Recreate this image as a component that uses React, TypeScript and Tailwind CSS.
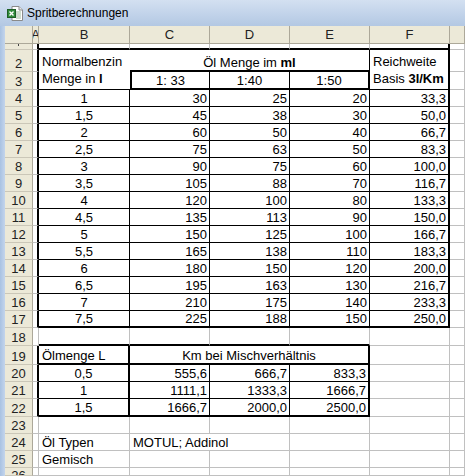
import type { ReactNode } from "react";

type Bd = "g" | "t" | "k" | "n";

const RB: Record<Bd, string> = {
  g: "border-r border-r-[#c0c0c0]",
  t: "border-r border-r-black",
  k: "border-r-2 border-r-black",
  n: "",
};
const BB: Record<Bd, string> = {
  g: "border-b border-b-[#c0c0c0]",
  t: "border-b border-b-black",
  k: "border-b-2 border-b-black",
  n: "",
};
const AL = {
  left: "justify-start pl-[3px]",
  right: "justify-end pr-[2px]",
  center: "justify-center",
};

function Cell({
  r = "g",
  b = "g",
  align = "left",
  className = "",
  children,
}: {
  r?: Bd;
  b?: Bd;
  align?: "left" | "right" | "center";
  className?: string;
  children?: ReactNode;
}) {
  return (
    <div
      className={`flex items-end whitespace-nowrap leading-[15px] ${RB[r]} ${BB[b]} ${AL[align]} ${className}`}
    >
      {children}
    </div>
  );
}

function RowHead({ n, className = "" }: { n: number | string; className?: string }) {
  return (
    <div
      className={`flex items-end justify-center overflow-hidden leading-[15px] bg-[#ece9d8] text-[#222] border-r border-r-[#aca899] border-b border-b-[#cbc7b8] ${className}`}
    >
      {n}
    </div>
  );
}

const upper = [
  ["1", "30", "25", "20", "33,3"],
  ["1,5", "45", "38", "30", "50,0"],
  ["2", "60", "50", "40", "66,7"],
  ["2,5", "75", "63", "50", "83,3"],
  ["3", "90", "75", "60", "100,0"],
  ["3,5", "105", "88", "70", "116,7"],
  ["4", "120", "100", "80", "133,3"],
  ["4,5", "135", "113", "90", "150,0"],
  ["5", "150", "125", "100", "166,7"],
  ["5,5", "165", "138", "110", "183,3"],
  ["6", "180", "150", "120", "200,0"],
  ["6,5", "195", "163", "130", "216,7"],
  ["7", "210", "175", "140", "233,3"],
  ["7,5", "225", "188", "150", "250,0"],
];

const lower = [
  ["0,5", "555,6", "666,7", "833,3"],
  ["1", "1111,1", "1333,3", "1666,7"],
  ["1,5", "1666,7", "2000,0", "2500,0"],
];

function ExcelIcon() {
  return (
    <svg width="17" height="16" viewBox="0 0 17 16">
      <path d="M5 1.5h7l3.5 3.5v10.5H5z" fill="#fff" stroke="#8a8a8a" />
      <path d="M12 1.5V5h3.5" fill="#e8e8e8" stroke="#8a8a8a" />
      <path d="M9 7h5M9 9h5M9 11h5M9 13h5" stroke="#9bb89b" />
      <rect x="0.5" y="4.5" width="8" height="8" fill="#2f8a3a" stroke="#1d5e25" />
      <path d="M2.5 6.5l4 4M6.5 6.5l-4 4" stroke="#fff" strokeWidth="1.4" />
    </svg>
  );
}

export default function App() {
  const cols = ["A", "B", "C", "D", "E", "F", ""];

  return (
    <div className="w-[465px] h-[476px] overflow-hidden bg-white flex flex-col font-['Liberation_Sans',Arial,sans-serif] text-[13px] text-black">
      {/* Title bar */}
      <div className="h-[26px] shrink-0 flex items-center gap-[3px] pl-[7px] bg-gradient-to-b from-[#d3e0f1] to-[#b3c8e3]">
        <ExcelIcon />
        <span className="text-[12px] text-black">Spritberechnungen</span>
      </div>

      <div className="flex flex-1 min-h-0">
        <div className="w-[5px] shrink-0 bg-gradient-to-r from-[#a9c2e2] to-[#c4d5ec]" />

        <div className="flex-1 grid grid-cols-[28px_6px_91px_80px_80px_80px_80px_1fr] grid-rows-[18px_6px_22px_18px_repeat(14,17px)_18px_19px_17px_17px_18px_17px_17px_17px_8px] overflow-hidden">
          {/* Column headers */}
          <div className="bg-[#ece9d8] border-r border-r-[#aca899] border-b border-b-[#aca899]" />
          {cols.map((c, i) => (
            <div
              key={i}
              className="flex items-center justify-center overflow-hidden bg-[#ece9d8] text-[#222] border-r border-r-[#aca899] border-b border-b-[#aca899]"
            >
              {c}
            </div>
          ))}

          {/* Row 1 (scrolled, mostly hidden) */}
          <div className="flex justify-center overflow-hidden bg-[#ece9d8] border-r border-r-[#aca899] border-b border-b-[#cbc7b8]">
            <div className="w-px h-[2px] bg-[#444]" />
          </div>
          <Cell r="k" />
          <Cell b="k" />
          <Cell b="k" />
          <Cell b="k" />
          <Cell b="k" />
          <Cell b="k" r="k" />
          <Cell />

          {/* Row 2 */}
          <RowHead n={2} />
          <Cell r="k" />
          <div className="row-span-2 flex flex-col pl-[3px] pt-[3px] leading-[17px] border-b border-b-black">
            <span>Normalbenzin</span>
            <span>
              Menge in <b>l</b>
            </span>
          </div>
          <Cell className="col-span-3" align="center" b="k" r="t">
            <span>
              Öl Menge im <b>ml</b>
            </span>
          </Cell>
          <div className="row-span-2 flex flex-col pl-[3px] pt-[3px] leading-[17px] border-b border-b-black border-r-2 border-r-black">
            <span>Reichweite</span>
            <span>
              Basis <b>3l/Km</b>
            </span>
          </div>
          <Cell />

          {/* Row 3 */}
          <RowHead n={3} />
          <Cell r="k" />
          <Cell align="center" r="t" b="k" className="border-l-2 border-l-black">
            1: 33
          </Cell>
          <Cell align="center" r="t" b="k">
            1:40
          </Cell>
          <Cell align="center" r="k" b="k">
            1:50
          </Cell>
          <Cell />

          {/* Rows 4-17 */}
          {upper.map((row, i) => {
            const last = i === upper.length - 1;
            const b: Bd = last ? "k" : "t";
            return [
              <RowHead key={`h${i}`} n={i + 4} />,
              <Cell key={`a${i}`} r="k" />,
              <Cell key={`b${i}`} align="center" r="t" b={b}>
                {row[0]}
              </Cell>,
              <Cell key={`c${i}`} align="right" r="t" b={b}>
                {row[1]}
              </Cell>,
              <Cell key={`d${i}`} align="right" r="t" b={b}>
                {row[2]}
              </Cell>,
              <Cell key={`e${i}`} align="right" r="t" b={b}>
                {row[3]}
              </Cell>,
              <Cell key={`f${i}`} align="right" r="k" b={b}>
                {row[4]}
              </Cell>,
              <Cell key={`g${i}`} />,
            ];
          })}

          {/* Row 18 */}
          <RowHead n={18} />
          <Cell />
          <Cell b="k" />
          <Cell b="k" />
          <Cell b="k" />
          <Cell b="k" />
          <Cell />
          <Cell />

          {/* Row 19 */}
          <RowHead n={19} />
          <Cell r="k" />
          <Cell r="k" b="k">
            Ölmenge L
          </Cell>
          <Cell className="col-span-3" align="center" r="k" b="k">
            Km bei Mischverhältnis
          </Cell>
          <Cell />
          <Cell />

          {/* Rows 20-22 */}
          {lower.map((row, i) => {
            const b: Bd = i === lower.length - 1 ? "k" : "t";
            return [
              <RowHead key={`lh${i}`} n={i + 20} />,
              <Cell key={`la${i}`} r="k" />,
              <Cell key={`lb${i}`} align="center" r="k" b={b}>
                {row[0]}
              </Cell>,
              <Cell key={`lc${i}`} align="right" r="t" b={b}>
                {row[1]}
              </Cell>,
              <Cell key={`ld${i}`} align="right" r="t" b={b}>
                {row[2]}
              </Cell>,
              <Cell key={`le${i}`} align="right" r="k" b={b}>
                {row[3]}
              </Cell>,
              <Cell key={`lf${i}`} />,
              <Cell key={`lg${i}`} />,
            ];
          })}

          {/* Row 23 */}
          <RowHead n={23} />
          <Cell />
          <Cell />
          <Cell />
          <Cell />
          <Cell />
          <Cell />
          <Cell />

          {/* Row 24 */}
          <RowHead n={24} />
          <Cell />
          <Cell>Öl Typen</Cell>
          <Cell r="n">MOTUL; Addinol</Cell>
          <Cell />
          <Cell />
          <Cell />
          <Cell />

          {/* Row 25 */}
          <RowHead n={25} />
          <Cell />
          <Cell>Gemisch</Cell>
          <Cell />
          <Cell />
          <Cell />
          <Cell />
          <Cell />

          {/* Row 26 (cut off) */}
          <RowHead n={26} className="items-start" />
          <Cell />
          <Cell />
          <Cell />
          <Cell />
          <Cell />
          <Cell />
          <Cell />
        </div>
      </div>
    </div>
  );
}
